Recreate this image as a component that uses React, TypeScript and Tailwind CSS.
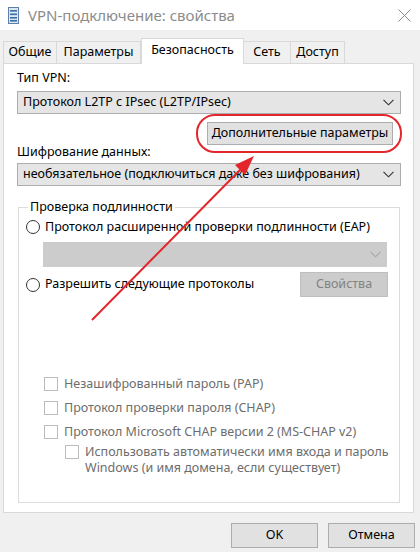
import React from "react";

const Chevron = ({ color = "#333" }: { color?: string }) => (
  <svg width="11" height="7" viewBox="0 0 11 7" className="shrink-0">
    <path d="M0.5 0.8 L5.5 5.8 L10.5 0.8" fill="none" stroke={color} strokeWidth="1.1" />
  </svg>
);

const Select = ({ text, className = "" }: { text: string; className?: string }) => (
  <div
    className={`h-[23px] flex items-center justify-between pl-[5px] pr-[6px] bg-[#e5e5e5] border border-[#adadad] ${className}`}
  >
    <span className="truncate">{text}</span>
    <Chevron />
  </div>
);

const Radio = ({ label }: { label: string }) => (
  <div className="flex items-center ml-[7px]">
    <span className="w-[14px] h-[14px] rounded-full border border-[#333] bg-white shrink-0" />
    <span className="ml-[5px]">{label}</span>
  </div>
);

const Check = ({ label }: { label: string }) => (
  <div className="flex items-start text-[#6d6d6d]">
    <span className="w-[14px] h-[14px] mt-[5px] border border-[#bcbcbc] bg-white shrink-0" />
    <span className="ml-[6px] leading-[24px] whitespace-nowrap">{label}</span>
  </div>
);

const tabs = ["Общие", "Параметры", "Безопасность", "Сеть", "Доступ"];
const tabWidths = ["w-[54px]", "w-[85px]", "w-[103px]", "w-[48px]", "w-[55px]"];

export default function App() {
  return (
    <div
      className="relative w-[420px] h-[552px] overflow-hidden bg-[#f0f0f0] text-[12.5px] text-black"
      style={{ fontFamily: '"Noto Sans", "Open Sans", sans-serif' }}
    >
      {/* title bar */}
      <div className="h-[30px] bg-white flex items-center pl-[8px]">
        <svg width="11" height="17" viewBox="0 0 11 17">
          <rect x="0.5" y="0.5" width="10" height="16" fill="#dbe7f3" stroke="#5d7fa8" />
          <rect x="2" y="3" width="7" height="1.6" fill="#3a6ea5" />
          <rect x="2" y="6.5" width="7" height="1.6" fill="#3a6ea5" />
          <rect x="2" y="10" width="7" height="1.6" fill="#3a6ea5" />
          <rect x="2" y="13" width="7" height="1.6" fill="#3a6ea5" />
        </svg>
        <span className="ml-[9px] text-[15px] text-[#8c8c8c]">VPN-подключение: свойства</span>
        <svg width="13" height="13" viewBox="0 0 13 13" className="ml-auto mr-[9px]">
          <path d="M0.5 0.5 L12.5 12.5 M12.5 0.5 L0.5 12.5" stroke="#8c8c8c" strokeWidth="1" />
        </svg>
      </div>

      {/* tabs */}
      <div className="flex items-end h-[33px] pl-[3px]">
        {tabs.map((t, i) => {
          const active = i === 2;
          return (
            <div
              key={t}
              className={`${tabWidths[i]} flex items-center justify-center border border-[#d9d9d9] ${
                active
                  ? "h-[26px] bg-white border-b-0 -mb-px relative z-10 pb-[3px]"
                  : "h-[22px] bg-[#f0f0f0] border-b-0 -ml-px first:ml-0"
              }`}
            >
              {t}
            </div>
          );
        })}
      </div>

      {/* panel */}
      <div className="ml-[3px] w-[411px] h-[450px] bg-white border border-[#d9d9d9] pl-[13px] pr-[12px] flex flex-col">
        <div className="mt-[5px] leading-[18px]">Тип VPN:</div>
        <Select className="mt-[4px]" text="Протокол L2TP с IPsec (L2TP/IPsec)" />
        <div className="flex justify-end mt-[8px] pr-[8px]">
          <div className="w-[186px] h-[23px] flex items-center justify-center bg-[#e1e1e1] border border-[#adadad]">
            Дополнительные параметры
          </div>
        </div>
        <div className="leading-[14px]">Шифрование данных:</div>
        <Select className="mt-[4px]" text="необязательное (подключиться даже без шифрования)" />

        <fieldset className="mt-[13px] ml-px mr-px h-[304px] border border-[#dcdcdc] p-0 m-0">
          <legend className="ml-[9px] px-[2px] leading-[16px]">Проверка подлинности</legend>
          <div className="mt-[4px] h-[16px] flex items-center">
            <Radio label="Протокол расширенной проверки подлинности (EAP)" />
          </div>
          <div className="mt-[7px] ml-[24px] mr-[12px] h-[25px] bg-[#cccccc] flex items-center justify-end pr-[6px]">
            <Chevron color="#a8a8a8" />
          </div>
          <div className="mt-[5px] h-[25px] flex items-center justify-between mr-[11px]">
            <Radio label="Разрешить следующие протоколы" />
            <div className="w-[88px] h-[25px] flex items-center justify-center bg-[#cccccc] border border-[#bfbfbf] text-[#838383]">
              Свойства
            </div>
          </div>
          <div className="mt-[75px] ml-[25px] flex flex-col">
            <Check label="Незашифрованный пароль (PAP)" />
            <Check label="Протокол проверки пароля (CHAP)" />
            <Check label="Протокол Microsoft CHAP версии 2 (MS-CHAP v2)" />
            <div className="flex items-start text-[#6d6d6d] ml-[21px]">
              <span className="w-[14px] h-[14px] mt-[1px] border border-[#bcbcbc] bg-white shrink-0" />
              <span className="ml-[6px] leading-[16px] whitespace-nowrap">
                Использовать автоматически имя входа и пароль
                <br />
                Windows (и имя домена, если существует)
              </span>
            </div>
          </div>
        </fieldset>
      </div>

      {/* footer buttons */}
      <div className="flex justify-end gap-[10px] pr-[5px] mt-[10px]">
        <div className="w-[87px] h-[25px] flex items-center justify-center bg-[#e1e1e1] border border-[#adadad]">
          OK
        </div>
        <div className="w-[87px] h-[25px] flex items-center justify-center bg-[#e1e1e1] border border-[#adadad]">
          Отмена
        </div>
      </div>

      {/* red annotation overlay */}
      <svg className="absolute inset-0 pointer-events-none" width="420" height="552" viewBox="0 0 420 552">
        <rect x="197" y="115" width="204" height="37" rx="18" ry="18" fill="none" stroke="#e3262b" strokeWidth="2" />
        <line x1="92" y1="320" x2="241" y2="169" stroke="#e3262b" strokeWidth="2" />
        <polygon points="254,156 245,175 235,165" fill="#e3262b" />
      </svg>
    </div>
  );
}
